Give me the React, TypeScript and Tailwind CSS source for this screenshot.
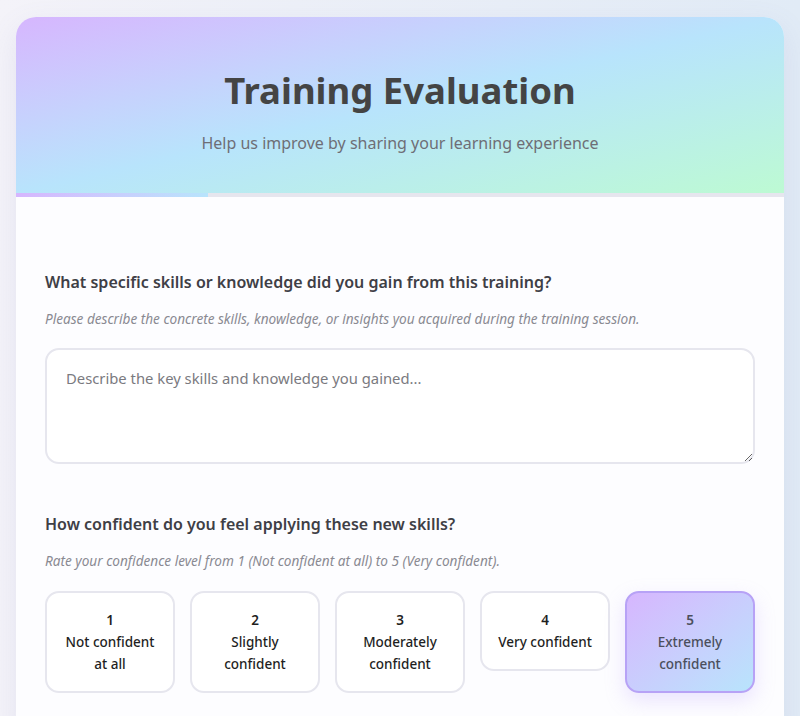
import { useState } from "react";

const OPCOES = [
  { valor: 1, rotulo: "Not confident at all" },
  { valor: 2, rotulo: "Slightly confident" },
  { valor: 3, rotulo: "Moderately confident" },
  { valor: 4, rotulo: "Very confident" },
  { valor: 5, rotulo: "Extremely confident" },
];

export default function App() {
  const [nivel, setNivel] = useState<number>(5);
  const [texto, setTexto] = useState("");

  return (
    <div className="min-h-screen bg-gradient-to-r from-[#f4f3f9] to-[#e1ebf6] px-4 pt-[17px] font-['Noto_Sans',sans-serif]">
      <div className="overflow-hidden rounded-t-[20px] bg-[#fdfdff] shadow-[0_10px_30px_rgba(120,120,180,0.12)]">
        <header className="bg-gradient-to-br from-[#d6b6fe] via-[#b8e4fc] to-[#bdfad3] px-8 pb-[38px] pt-[50px] text-center">
          <h1 className="text-[36.5px] font-bold leading-[46px] text-[#444]">Training Evaluation</h1>
          <p className="mt-[18px] text-[16px] leading-[24px] text-[#6e6e76]">
            Help us improve by sharing your learning experience
          </p>
        </header>
        <div className="h-1 bg-[#e6e6ee]">
          <div className="h-full w-1/4 bg-gradient-to-r from-[#d6b6fe] to-[#b8e4fc]" />
        </div>

        <div className="px-[29px] pb-10 pt-[73px]">
          <section>
            <h2 className="text-[16px] font-semibold leading-6 text-[#3f3f46]">
              What specific skills or knowledge did you gain from this training?
            </h2>
            <p className="mt-[15px] text-[13.6px] italic leading-5 text-[#8a8a92]">
              Please describe the concrete skills, knowledge, or insights you acquired during the training session.
            </p>
            <textarea
              value={texto}
              onChange={(e) => setTexto(e.target.value)}
              placeholder="Describe the key skills and knowledge you gained..."
              className="mt-[19px] block h-[116px] w-full rounded-[14px] border-2 border-[#e6e6ee] bg-white px-[19px] py-[16px] text-[14.8px] leading-6 text-[#444] outline-none placeholder:text-[#7a7a80]"
            />
          </section>

          <section className="mt-[48px]">
            <h2 className="text-[16px] font-semibold leading-6 text-[#3f3f46]">
              How confident do you feel applying these new skills?
            </h2>
            <p className="mt-[15px] text-[13.6px] italic leading-5 text-[#8a8a92]">
              Rate your confidence level from 1 (Not confident at all) to 5 (Very confident).
            </p>
            <div className="mt-[20px] grid grid-cols-5 items-start gap-[15px]">
              {OPCOES.map((o) => {
                const ativo = o.valor === nivel;
                return (
                  <button
                    key={o.valor}
                    type="button"
                    onClick={() => setNivel(o.valor)}
                    className={
                      ativo
                        ? "rounded-[14px] border-2 border-[#b7a2f6] bg-gradient-to-br from-[#d6b6fe] to-[#b8e4fc] px-3 py-4 text-[13.5px] font-medium leading-[22px] text-[#4b4f5c] shadow-[0_8px_20px_rgba(180,150,250,0.25)]"
                        : "rounded-[14px] border-2 border-[#e6e6ee] bg-white px-3 py-4 text-[13.5px] font-medium leading-[22px] text-[#1f1f1f]"
                    }
                  >
                    <span className="block font-semibold">{o.valor}</span>
                    <span className="block">{o.rotulo}</span>
                  </button>
                );
              })}
            </div>
          </section>
        </div>
      </div>
    </div>
  );
}
